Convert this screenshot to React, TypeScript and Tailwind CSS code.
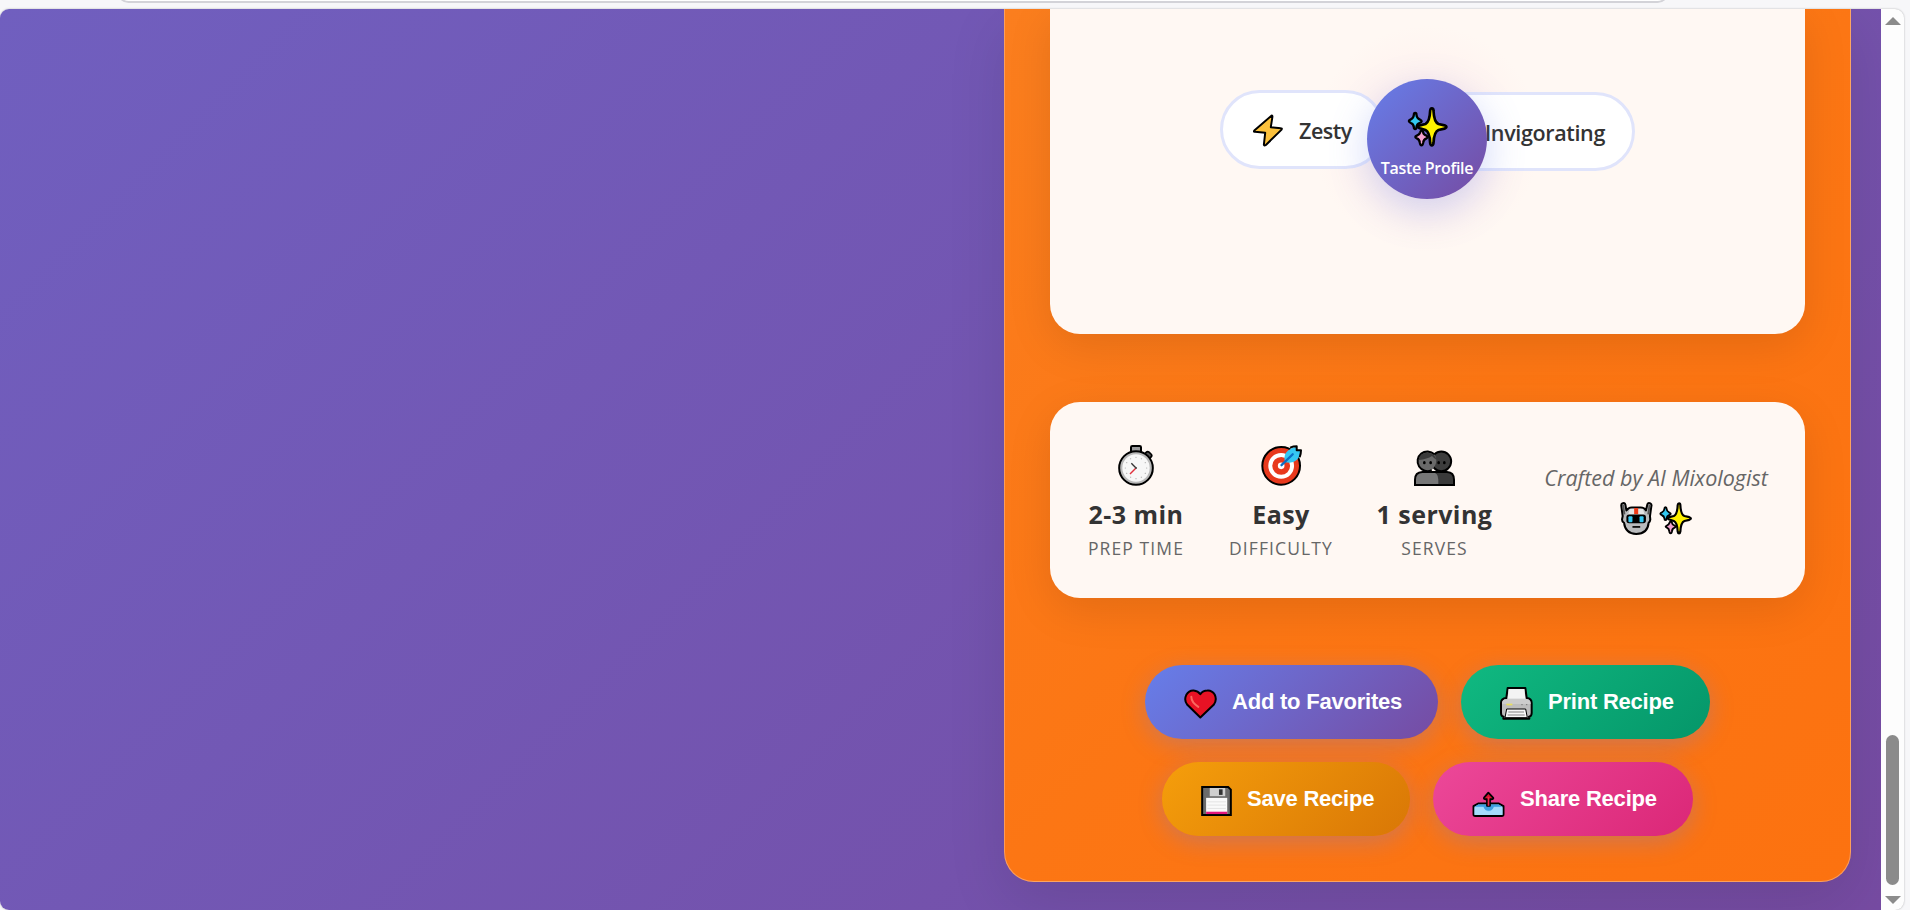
import type { ReactNode } from "react";

const ink = "#000";

function Sparkles({ className }: { className: string }) {
  return (
    <svg viewBox="0 0 122 120" className={className} strokeLinejoin="round" stroke={ink}>
      <path d="M44 71Q48 71 48 76Q49 83 58 86Q65 90 58 94Q49 97 48 107Q47 115 43 115Q39 115 38 107Q37 97 29 94Q20 90 29 86Q37 83 39 76Q40 71 44 71Z" fill="#f3a1cf" strokeWidth="7" />
      <path d="M24 18Q28 18 28 24Q29 34 37 37Q50 43 37 48Q29 51 28 60Q28 66 24 66Q20 66 20 60Q19 51 11 48Q-1 42 11 37Q19 34 20 24Q20 18 24 18Z" fill="#32c8f0" strokeWidth="7" />
      <path d="M74 4Q79 4 79 11C80 34 84 47 94 51L112 55Q124 60 112 65L94 69C84 73 80 86 79 108Q78 115 74 115Q70 115 69 108C68 86 64 73 55 69L38 64Q28 60 38 55L55 51C65 46 68 34 69 11Q70 4 74 4Z" fill="#fff100" strokeWidth="8" />
    </svg>
  );
}

function Bolt() {
  return (
    <svg viewBox="160 165 91 98" className="mt-[2px] h-[33px] w-[30px]" strokeLinejoin="round">
      <path d="M216 169L164 214Q161 218 166 218L197 221L193 257Q194 261 199 258L246 212Q250 207 244 207L214 204L219 172Q219 167 216 169Z" fill="#fcc13c" stroke={ink} strokeWidth="6" />
    </svg>
  );
}

function Stopwatch() {
  const ticks = [0, 30, 60, 90, 120, 150, 180, 210, 240, 270, 300, 330];
  return (
    <svg viewBox="234 165 108 123" className="h-[41px] w-[36px]">
      <rect x="314" y="187" width="20" height="18" rx="6" fill="#555" stroke={ink} strokeWidth="5" transform="rotate(42 324 196)" />
      <path d="M273 190V172Q273 168 277 168H299Q303 168 303 172V190Z" fill="#9b9b9b" stroke={ink} strokeWidth="6" />
      <circle cx="288" cy="234" r="50.5" fill="#b9b9b9" stroke={ink} strokeWidth="6" />
      <circle cx="288" cy="234" r="41" fill="#f7f7f7" />
      {ticks.map((a) => (
        <circle key={a} cx="288" cy="202" r="1.8" fill="#aaa" transform={`rotate(${a} 288 234)`} />
      ))}
      <path d="M288 234L274 220" stroke="#333" strokeWidth="4" />
      <path d="M288 234L270 252" stroke="#e0303c" strokeWidth="4" />
      <circle cx="288" cy="234" r="3" fill="#444" />
    </svg>
  );
}

function Target() {
  return (
    <svg viewBox="662 164 124 124" className="h-[41px] w-[41px]" strokeLinejoin="round">
      <circle cx="723" cy="227" r="57" fill="#e8391d" stroke={ink} strokeWidth="6" />
      <circle cx="723" cy="227" r="33" fill="#e8391d" stroke="#fff" strokeWidth="12" />
      <circle cx="723" cy="227" r="10" fill="#fff" />
      <path d="M734 213Q729 194 744 181Q755 171 770 169V180L783 181Q782 198 770 209Q756 221 736 216Z" fill="#35c8f3" />
      <path d="M750 172Q760 168 770 168V180L783 180Q783 190 779 201" fill="none" stroke={ink} strokeWidth="6" />
      <path d="M724 225L758 192" stroke="#0c6fc4" strokeWidth="7" strokeLinecap="round" />
    </svg>
  );
}

function People() {
  return (
    <svg viewBox="164 179 123 108" className="h-[36px] w-[41px]" stroke={ink} strokeWidth="6">
      <path d="M215 284V263Q215 245 235 245H263Q284 246 284 268V284Z" fill="#3a3a3a" />
      <circle cx="246" cy="213" r="29.500" fill="#3d3d3d" />
      <path d="M167 284V268Q167 246 189 245H216Q237 246 237 268V284Z" fill="#777" stroke="none" />
      <path d="M284 284H167V268Q167 246 189 245H263" fill="none" />
      <path d="M217 239A29.500 29.500 0 1 1 224 191Q231 199 231 210Q231 226 217 239Z" fill="#6a6a6a" stroke="none" />
      <path d="M217 239.500A29.500 29.500 0 1 1 225 192" fill="none" />
      <path d="M178 209Q180 187 204 187Q226 187 231 208Q222 202 218 197Q204 206 178 209Z" fill="#3a3a3a" stroke="none" />
      <g fill={ink} stroke="none">
        <ellipse cx="195" cy="217" rx="4" ry="5" />
        <ellipse cx="214" cy="217" rx="4" ry="5" />
        <ellipse cx="238" cy="217" rx="4" ry="5" />
        <ellipse cx="255" cy="217" rx="4" ry="5" />
      </g>
    </svg>
  );
}

function Robot() {
  return (
    <svg viewBox="780 337 98 98" className="h-[33px] w-[33px]" strokeLinejoin="round">
      <path d="M787 341Q794 338 796 345L799 362Q804 353 815 353H841Q853 353 857 362L861 345Q863 338 870 341Q875 344 873 350L869 379L870 389Q869 396 865 399Q862 432 828 432Q796 431 792 399Q786 396 786 389L788 379L784 349Q783 343 787 341Z" fill="#b9bbbd" stroke={ink} strokeWidth="6" />
      <path d="M789 345L793 374M868 345L864 374" stroke="#555" strokeWidth="6" />
      <path d="M809 357H848L853 375H804Z" fill="#e5e5e5" />
      <rect x="822" y="355" width="12" height="18" fill="#f03a17" />
      <rect x="799" y="374" width="58" height="26" rx="8" fill={ink} />
      <rect x="805" y="379" width="12" height="18" rx="3" fill="#35c8f3" />
      <rect x="838" y="379" width="12" height="18" rx="3" fill="#35c8f3" />
      <path d="M817 411H840" stroke={ink} strokeWidth="5" />
    </svg>
  );
}

function Heart() {
  return (
    <svg viewBox="161 118 99 89" className="mt-[3px] h-[30px] w-[33px]" strokeLinejoin="round">
      <path d="M210 203L171 165Q160 151 168 135Q176 121 190 122Q203 123 210 133Q218 122 231 122Q245 121 253 134Q261 150 250 165Z" fill="#e81224" stroke={ink} strokeWidth="6" />
      <path d="M183 141Q183 158 204 171" fill="none" stroke="#f9695f" strokeWidth="6" strokeLinecap="round" />
    </svg>
  );
}

function Printer() {
  return (
    <svg viewBox="241 112 99 99" className="mt-[3px] h-[33px] w-[33px]" strokeLinejoin="round">
      <path d="M264 115H317L321 145Q336 146 336 160V190Q336 200 328 201L329 207H251L252 201Q244 200 244 190V160Q244 146 260 145Z" fill="#bdbdbd" stroke={ink} strokeWidth="6" />
      <path d="M267 118H314L317 147H264Z" fill="#f3f3f3" />
      <path d="M261 148H319Q333 149 333 163H247Q247 150 261 148Z" fill="#ccc" />
      <rect x="260" y="162" width="18" height="5" fill="#e8df5c" />
      <path d="M305 165H309M319 165H323" stroke="#777" strokeWidth="3" />
      <path d="M261 178H318L323 204H256Z" fill="#f7f7f7" stroke={ink} strokeWidth="3" />
      <path d="M266 187H313M264 196H315" stroke="#aaa" strokeWidth="4" />
    </svg>
  );
}

function Floppy() {
  return (
    <svg viewBox="213 407 93 91" className="mt-[3px] h-[30px] w-[31px]">
      <path d="M216 410H295L303 418V495H216Z" fill="#6b6b6b" stroke={ink} strokeWidth="6" />
      <path d="M239 413H286V438H239Z" fill="#cfcfcf" />
      <rect x="267" y="417" width="11" height="17" fill="#333" />
      <rect x="228" y="443" width="64" height="49" fill="#fafafa" />
      <rect x="228" y="485" width="64" height="7" fill="#e3177c" />
      <path d="M232 455H288M232 465H288M232 475H288" stroke="#dedede" strokeWidth="2.500" />
    </svg>
  );
}

function Outbox() {
  return (
    <svg viewBox="157 422 99 79" className="mt-[9px] h-[26px] w-[33px]" strokeLinejoin="round">
      <path d="M175 460H238L252 468V493Q252 498 247 498H166Q161 498 161 493V468Z" fill="#8fd0f8" stroke={ink} strokeWidth="6" />
      <path d="M176 463H237L248 470H223Q219 482 207 482Q195 482 191 470H165Z" fill="#3f9fe0" />
      <path d="M164 471H191Q196 484 207 484Q218 484 223 471H249V495H164Z" fill="#a5dbfb" />
      <path d="M206 427L221 443Q222 447 216 447H211V467H202V447H196Q191 446 193 442Z" fill="#d9122f" stroke={ink} strokeWidth="5.500" />
      <path d="M206.500 440V467" stroke="#f0284a" strokeWidth="5" />
    </svg>
  );
}

function Stat({ icon, value, label, width }: { icon: ReactNode; value: string; label: string; width: string }) {
  return (
    <div className={`flex shrink-0 flex-col items-center whitespace-nowrap ${width}`}>
      <div className="flex h-[41px] items-end">{icon}</div>
      <div className="mt-[10px] text-[25px] leading-[36px] font-bold tracking-[0.45px] text-[#333]">{value}</div>
      <div className="mt-[2px] text-[17.5px] leading-[28px] tracking-[1.1px] text-[#666]">{label}</div>
    </div>
  );
}

function Action({ icon, label, look }: { icon: ReactNode; label: string; look: string }) {
  return (
    <button
      className={`flex h-[74px] shrink-0 items-center rounded-full pl-[39px] text-left font-['Liberation_Sans',sans-serif] text-[22px] font-bold whitespace-nowrap text-white shadow-[0_6px_24px_rgba(102,126,234,0.3)] ${look}`}
    >
      {icon}
      <span className="mb-[2px] ml-[15px] tracking-[-0.22px]">{label}</span>
    </button>
  );
}

export default function App() {
  return (
    <div className="flex h-[910px] w-[1910px] flex-col overflow-hidden bg-[#f7f7f9] font-['Open_Sans',sans-serif]">
      <div className="h-[9px] shrink-0 overflow-hidden">
        <div className="-mt-[20px] ml-[117px] h-[23px] w-[1552px] rounded-full border-2 border-[#d3d3d8] bg-white" />
      </div>
      <div className="flex h-[901px] w-[1904px] overflow-hidden rounded-[9px] bg-[#fdfdfd] shadow-[0_0_2px_rgba(0,0,0,0.3)]">
        <main className="flex w-[1881px] items-start justify-end overflow-hidden bg-[linear-gradient(135deg,#705fbf,#764ba2)] pr-[30px]">
          <section className="h-[873px] w-[847px] shrink-0 rounded-b-[30px] border border-t-0 border-white/30 bg-[linear-gradient(135deg,#fb7e1e,#fc7614_50%,#fc7210)] px-[45px] shadow-[0_20px_60px_rgba(0,0,0,0.1)]">
            <div className="flex h-[325px] justify-center rounded-b-[30px] bg-[#fff8f3] shadow-[0_12px_45px_rgba(0,0,0,0.1)]">
              <div className="relative h-[325px] w-[415px]">
                <div className="absolute top-[15px] left-[92px] h-[230px] w-[230px] rounded-full bg-[radial-gradient(circle,rgba(255,180,200,0.1)_30%,transparent_70%)]" />
                <div className="absolute top-[81px] left-0 flex h-[79px] w-[165px] items-center rounded-full border-[3px] border-[#e0e4fb] bg-white pl-[30px]">
                  <Bolt />
                  <span className="mt-[3px] ml-[16px] text-[21.5px] font-semibold tracking-[-0.5px] text-[#333]">Zesty</span>
                </div>
                <div className="absolute top-[83px] right-0 flex h-[79px] w-[230px] items-center justify-end rounded-full border-[3px] border-[#e0e4fb] bg-white pr-[27px]">
                  <span className="mt-[3px] text-[21.5px] font-semibold tracking-[-0.35px] text-[#333]">Invigorating</span>
                </div>
                <div className="absolute top-[70px] left-[147px] flex h-[120px] w-[120px] flex-col items-center rounded-full bg-[linear-gradient(135deg,#667eea,#764ba2)] pt-[28px] shadow-[0_12px_38px_rgba(102,126,234,0.3)]">
                  <Sparkles className="h-[40px] w-[41px]" />
                  <span className="mt-[8px] text-[16px] leading-[26px] font-semibold tracking-[-0.3px] whitespace-nowrap text-white">Taste Profile</span>
                </div>
              </div>
            </div>
            <div className="mt-[68px] flex h-[196px] rounded-[30px] bg-[#fff8f3] pt-[43px] pl-[38px] shadow-[0_12px_45px_rgba(0,0,0,0.1)]">
              <div className="flex gap-[45px]">
                <Stat icon={<Stopwatch />} value="2-3 min" label="PREP TIME" width="w-[96px]" />
                <Stat icon={<Target />} value="Easy" label="DIFFICULTY" width="w-[104px]" />
                <Stat icon={<People />} value="1 serving" label="SERVES" width="w-[113px]" />
              </div>
              <div className="ml-[53px] flex w-[224px] flex-col items-center pt-[17px] text-[21.5px] leading-[34px] whitespace-nowrap text-[#666] italic">
                <span className="-mt-px">Crafted by AI Mixologist</span>
                <div className="mt-[7px] flex gap-[6px]">
                  <Robot />
                  <Sparkles className="h-[33px] w-[33px]" />
                </div>
              </div>
            </div>
            <div className="mt-[67px] flex flex-col items-center gap-[23px]">
              <div className="flex gap-[23px]">
                <Action icon={<Heart />} label="Add to Favorites" look="w-[293px] bg-[linear-gradient(135deg,#667eea,#764ba2)]" />
                <Action icon={<Printer />} label="Print Recipe" look="w-[249px] bg-[linear-gradient(135deg,#10b981,#059669)]" />
              </div>
              <div className="flex gap-[23px]">
                <Action icon={<Floppy />} label="Save Recipe" look="w-[248px] bg-[linear-gradient(135deg,#f59e0b,#d97706)]" />
                <Action icon={<Outbox />} label="Share Recipe" look="w-[260px] bg-[linear-gradient(135deg,#ec4899,#db2777)]" />
              </div>
            </div>
          </section>
        </main>
        <div className="flex w-[23px] flex-col items-center pt-[8px]">
          <svg viewBox="0 0 16 8" className="h-[8px] w-[16px]"><path d="M8 0L16 8H0Z" fill="#8b8b8b" /></svg>
          <div className="mt-[710px] h-[150px] w-[13px] rounded-full bg-[#8b8b8b]" />
          <svg viewBox="0 0 16 8" className="mt-[11px] h-[8px] w-[16px]"><path d="M0 0H16L8 8Z" fill="#8b8b8b" /></svg>
        </div>
      </div>
    </div>
  );
}
